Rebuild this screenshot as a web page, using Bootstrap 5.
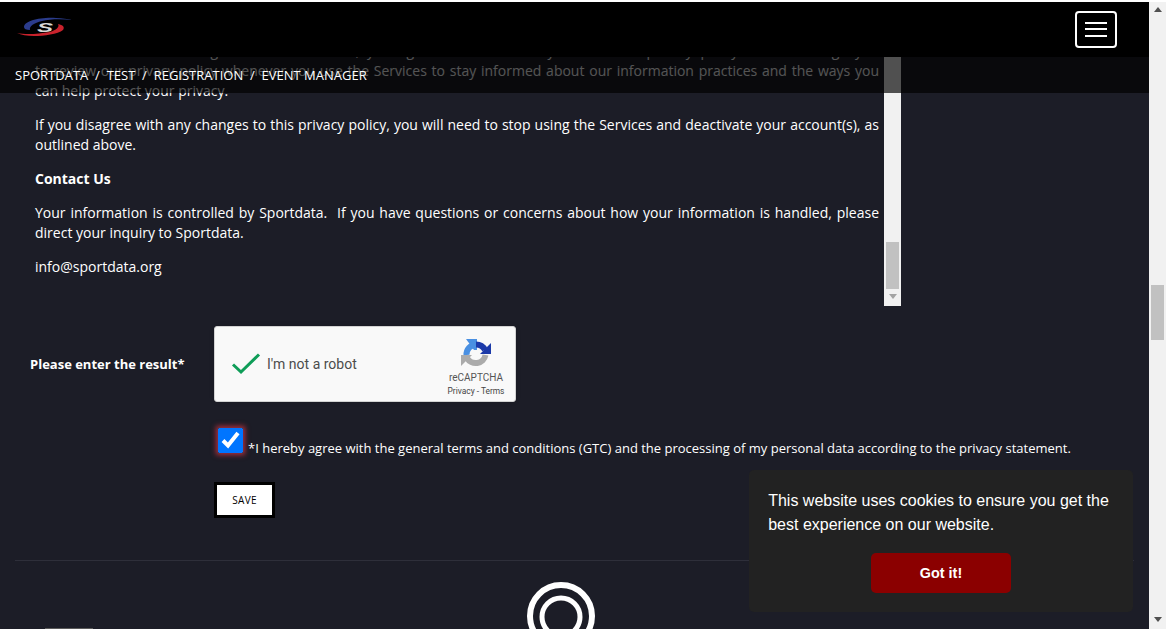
<!DOCTYPE html>
<html lang="en">
<head>
<meta charset="utf-8">
<title>Sportdata registration</title>
<link href="https://cdn.jsdelivr.net/npm/bootstrap@5.3.0/dist/css/bootstrap.min.css" rel="stylesheet">
<style>
html,body{height:100%;overflow:hidden}
body{background:#1c1d27;color:#fff;font-family:"Open Sans",sans-serif;font-size:14px;line-height:20px}
.top-strip{height:2px;background:#fff;position:fixed;top:0;left:0;right:0;z-index:50}
.pg-main{width:1149px;height:629px;overflow:hidden;padding:2px 15px 0;position:relative}
.fake-sb{width:17px;background:#f1f1f1;flex:none;display:flex;flex-direction:column;align-items:center;position:relative}
.sb-up,.sb-down{width:0;height:0;border-left:4px solid transparent;border-right:4px solid transparent;position:absolute;left:4.5px}
.sb-up{border-bottom:5px solid #505050;top:7px}
.sb-down{border-top:5px solid #505050;bottom:7px}
.sb-thumb{position:absolute;left:2px;width:13px;background:#c1c1c1}
.page-sb{height:629px;padding-top:2px}
.page-sb .sb-thumb{top:285px;height:55px}
.inner-sb .sb-thumb{top:240px;height:47px}
.inner-sb .sb-down{border-top-color:#a3a3a3}
.privacy-box{height:304px;width:886px;overflow:hidden}
.privacy-text{flex:1;padding:39px 5px 0 20px;text-align:justify}
.privacy-text p{margin-bottom:14px}
.just-line{display:block;text-align-last:justify}
.site-head{position:absolute;top:2px;left:0;width:1149px;z-index:10}
.brandbar{height:55px;background:#000;padding:0 32px 0 15px}
.brand-logo{margin-top:-7px}
.tog{width:42px;height:37px;border:2px solid #fff;border-radius:4px;background:transparent;padding:0;margin-top:-1px;display:flex;align-items:center;justify-content:center}
.crumbbar{height:36px;background:rgba(0,0,0,.67);padding:0 15px;font-size:13px;line-height:36px;white-space:nowrap}
.crumbbar span{margin-right:3.4px}
.captcha-label{width:199px;padding-left:15px;font-weight:700;font-size:13px}
.captcha-card{width:302px;height:76px;background:#f9f9f9;border:1px solid #d3d3d3;border-radius:3px;box-shadow:0 0 4px 1px rgba(0,0,0,.08);color:#4c4c4c;font-family:Roboto,sans-serif;position:relative}
.captcha-check{margin:0 2px 0 16px;flex:none}
.captcha-txt{font-size:14px;margin-left:4px}
.captcha-side{position:absolute;right:11px;top:11px;width:56px;text-align:center;color:#555}
.captcha-side b{display:block;font-weight:400;font-size:10px;line-height:12px;margin-top:2px}
.captcha-side i{display:block;font-style:normal;font-size:8.4px;line-height:14px;color:#444;white-space:nowrap;margin-left:-2px;margin-right:-2px}
.agree{margin:26px 0 0 203px;font-size:13px;white-space:nowrap}
.agree input{width:25px;height:25px;margin:0 5px 0 0;vertical-align:0;box-shadow:0 0 5px 2px rgba(220,53,69,.75);border-radius:0}
.save-btn{display:block;width:61px;height:36px;margin:24px 0 0 199px;padding:0;background:#fff;border:3px solid #000;border-radius:0;color:#000;font-size:10px;letter-spacing:.3px;line-height:30px}
.save-btn:hover{background:#fff;color:#000}
.rule{margin:42px 0 0;border:0;border-top:1px solid #2e2f3a;opacity:1}
.ring-logo{display:block;margin:21px 0 0 512px}
.bottom-tick{position:absolute;left:45px;bottom:0;width:48px;height:1px;background:#5b5b5b}
.cookie-box{position:fixed;right:33px;bottom:17px;width:384px;background:#222;border-radius:5px;padding:19.2px;font-family:"Liberation Sans",Arial,sans-serif;font-size:16px;line-height:24px;z-index:20}
.cookie-btn{display:block;width:140px;margin:16px auto 0;padding:0;height:40px;background:#8b0000;border:0;border-radius:5px;color:#fff;font-weight:700;font-size:14.4px;line-height:40px}
.cookie-btn:hover{background:#8b0000;color:#fff}
</style>
</head>
<body>
<div class="top-strip"></div>
<div class="d-flex">
  <div class="pg-main">
    <div class="privacy-box d-flex">
      <div class="privacy-text">
        <p><span class="just-line">Services after those changes become effective, you agree to be bound by the revised privacy policy. We encourage you</span><span class="just-line">to review our privacy policy whenever you use the Services to stay informed about our information practices and the ways you</span>can help protect your privacy.</p>
        <p>If you disagree with any changes to this privacy policy, you will need to stop using the Services and deactivate your account(s), as outlined above.</p>
        <p><strong>Contact Us</strong></p>
        <p>Your information is controlled by Sportdata.&nbsp; If you have questions or concerns about how your information is handled, please direct your inquiry to Sportdata.</p>
        <p>info@sportdata.org</p>
      </div>
      <div class="fake-sb inner-sb"><div class="sb-thumb"></div><div class="sb-down"></div></div>
    </div>

    <div class="d-flex align-items-center mt-3 pt-1">
      <div class="captcha-label">Please enter the result*</div>
      <div class="captcha-card d-flex align-items-center">
        <svg class="captcha-check" width="30" height="24" viewBox="0 0 30 24"><path d="M2 12.5L10 20L28 2.5" fill="none" stroke="#0f9d58" stroke-width="3"/></svg>
        <span class="captcha-txt">I'm not a robot</span>
        <div class="captcha-side">
          <svg width="32" height="32" viewBox="0 0 32 32">
            <path d="M6.5 17A10 10 0 0 1 16 6.5" fill="none" stroke="#4a90e2" stroke-width="6"/>
            <path d="M6 1L17 1L17 12L14 12Z" fill="#4a90e2"/>
            <path d="M16 6.5A10 10 0 0 1 25 12" fill="none" stroke="#1c3aa9" stroke-width="6"/>
            <path d="M31 5V16H20Z" fill="#1c3aa9"/>
            <path d="M25.5 17A10 10 0 0 1 7 20" fill="none" stroke="#ababab" stroke-width="6"/>
            <path d="M1 17H12L1 28Z" fill="#ababab"/>
          </svg>
          <b>reCAPTCHA</b>
          <i>Privacy - Terms</i>
        </div>
      </div>
    </div>

    <div class="agree"><input type="checkbox" checked>*I hereby agree with the general terms and conditions (GTC) and the processing of my personal data according to the privacy statement.</div>
    <button type="button" class="btn save-btn">SAVE</button>
    <hr class="rule">
    <svg class="ring-logo" width="68" height="68" viewBox="0 0 68 68"><circle cx="34" cy="34" r="31" fill="none" stroke="#fff" stroke-width="6"/><circle cx="34" cy="35" r="19" fill="none" stroke="#fff" stroke-width="5"/></svg>
    <div class="bottom-tick"></div>
  </div>
  <div class="fake-sb page-sb"><div class="sb-up"></div><div class="sb-thumb"></div><div class="sb-down"></div></div>
</div>

<header class="site-head">
  <nav class="navbar brandbar flex-nowrap align-items-center justify-content-between">
    <svg class="brand-logo" width="58" height="24" viewBox="15 14 58 24">
      <path d="M24 27C24 21 40 17 56 18C62 18 68 19 72 20C62 19 50 19 42 21C34 23 29 26 30 30C26 30 24 29 24 27Z" fill="#2b3c8c"/>
      <path d="M17 33C26 35 38 34 50 32C56 30 60 27 58 24C63 25 65 27 63 30C58 34 44 36 34 36C27 36 21 35 17 33Z" fill="#c9222c"/>
      <text x="45" y="32" text-anchor="middle" font-family="Liberation Sans, sans-serif" font-weight="700" font-style="italic" font-size="12" fill="#d8d8d8" textLength="16" lengthAdjust="spacingAndGlyphs">S</text>
    </svg>
    <button type="button" class="tog" aria-label="Menu">
      <svg width="22" height="15" viewBox="0 0 22 15"><path d="M0 1H22M0 7H22M0 14H22" stroke="#fff" stroke-width="2"/></svg>
    </button>
  </nav>
  <div class="crumbbar"><span>SPORTDATA</span> <span>/</span> <span>TEST</span> <span>/</span> <span>REGISTRATION</span> <span>/</span> <span>EVENT MANAGER</span></div>
</header>

<aside class="cookie-box">
  <div>This website uses cookies to ensure you get the best experience on our website.</div>
  <button type="button" class="btn cookie-btn">Got it!</button>
</aside>
<script src="https://cdn.jsdelivr.net/npm/bootstrap@5.3.0/dist/js/bootstrap.bundle.min.js"></script>
</body>
</html>
